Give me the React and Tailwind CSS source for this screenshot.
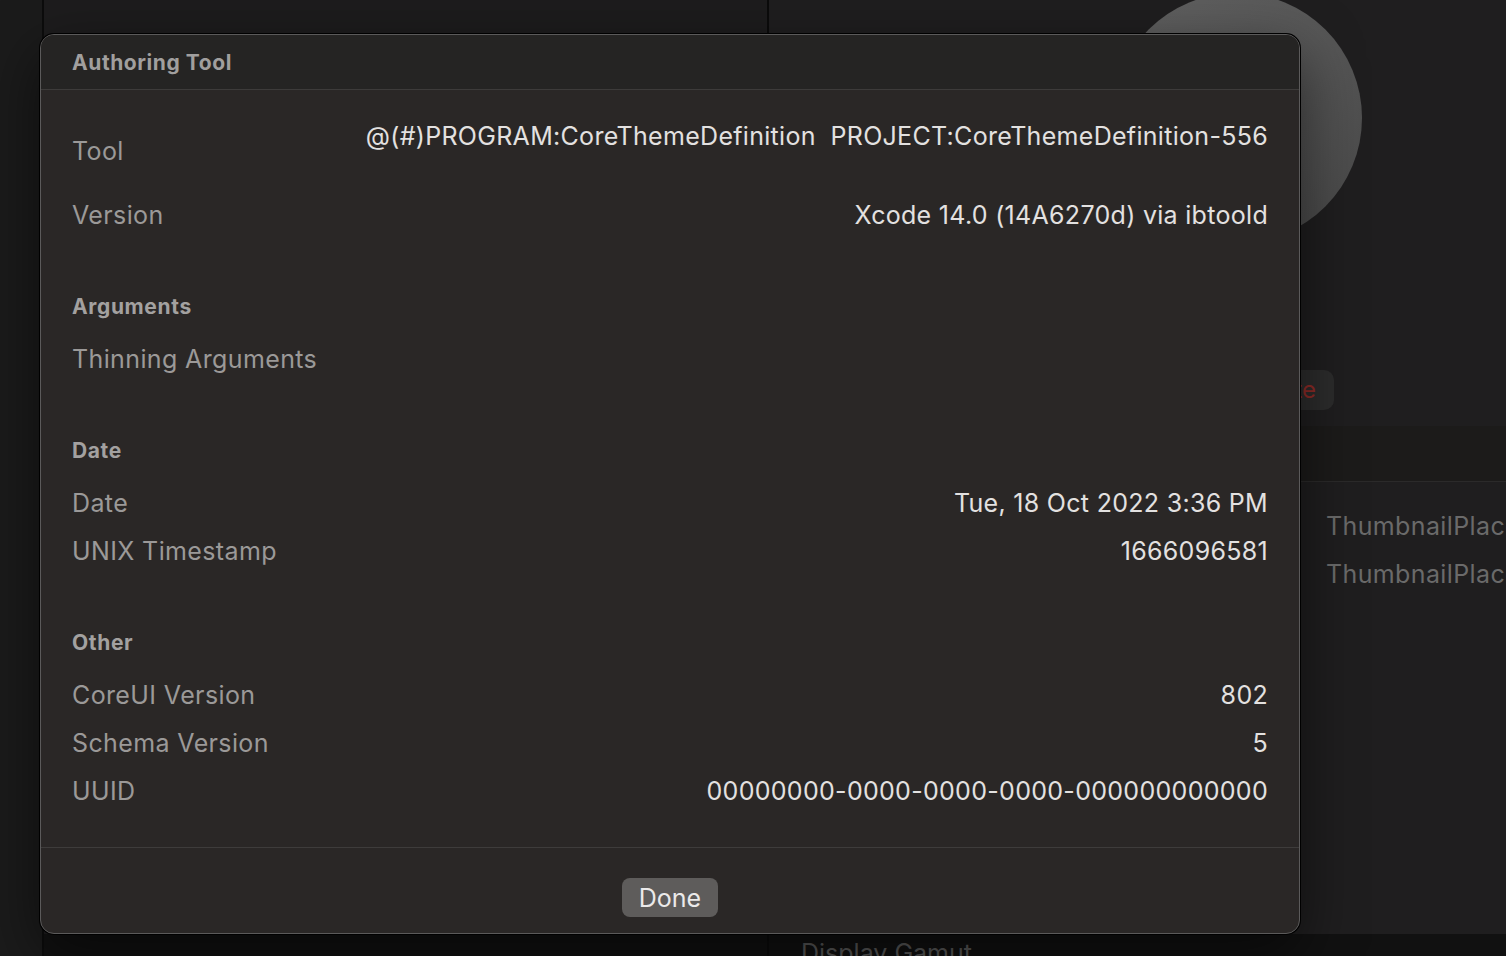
import React from 'react';

const font = { fontFamily: 'Inter, "Noto Sans", sans-serif' };

const Row = ({ label, value, tall }) => (
  <div className={`flex items-center justify-between ${tall ? 'h-[80px]' : 'h-[48px]'}`}>
    <span className="text-[25px] tracking-[0.015em] text-[#9b9998]">{label}</span>
    {value !== undefined && (
      <span className={`text-[25px] tracking-[0.012em] text-[#e3e1e0] text-right whitespace-pre ${tall ? 'leading-[32px] self-center' : ''}`}>
        {value}
      </span>
    )}
  </div>
);

const SectionHeader = ({ children }) => (
  <div className="h-[32px] mt-[51px] mb-[13px] flex items-center text-[21px] tracking-[0.03em] font-bold text-[#a3a1a0]">
    {children}
  </div>
);

const Background = () => (
  <div className="flex h-[956px] w-[1506px] overflow-hidden bg-[#1b1b1b]">
    <div className="w-[44px] shrink-0 bg-[#1b1b1b] border-r-2 border-[#0c0c0c]" />
    <div className="w-[725px] shrink-0 flex flex-col border-r-2 border-[#0b0b0b]">
      <div className="flex-1 bg-[#1d1c1d]" />
      <div className="h-[22px] bg-[#111111]" />
    </div>
    <div className="flex-1 flex flex-col bg-[#1f1e1f]">
      <div className="w-[250px] h-[250px] shrink-0 rounded-full bg-gradient-to-br from-[#616161] via-[#575757] to-[#474747] ml-[343px] mt-[-7px]" />
      <div className="mt-[127px] ml-[465px] w-[100px] h-[40px] rounded-[10px] bg-[#2c2c2c] flex items-center justify-end pr-[18px] text-[24px] text-[#8f2b27]">
        Delete
      </div>
      <div className="mt-[16px] h-[56px] bg-[#1c1b1a] border-b border-[#2b2a2a]" />
      <div className="mt-[21px] pl-[557px] text-[25px] tracking-[0.015em] text-[#6a6a6a] whitespace-nowrap">
        <div className="h-[48px] flex items-center">ThumbnailPlaceholder</div>
        <div className="h-[48px] flex items-center">ThumbnailPlaceholder</div>
      </div>
      <div className="flex-1" />
      <div className="h-[22px] bg-[#111111] pl-[32px] text-[25px] leading-[32px] pt-[3px] text-[#5a5a5a] overflow-hidden whitespace-nowrap">
        Display Gamut
      </div>
    </div>
  </div>
);

export default function App() {
  return (
    <div className="relative w-[1506px] h-[956px] overflow-hidden" style={font}>
      <Background />
      <div className="absolute left-[40px] top-[34px] w-[1260px] h-[900px] rounded-[14px] border border-[#5b5a5a] bg-[#2a2726] shadow-[0_0_0_1px_#000,0_20px_60px_rgba(0,0,0,0.55)] overflow-hidden flex flex-col">
        <div className="h-[55px] shrink-0 bg-[#252423] border-b border-[#3d3b3a] flex items-center pt-[1px] px-[31px] text-[21px] tracking-[0.027em] font-bold text-[#a19f9e]">
          Authoring Tool
        </div>
        <div className="flex-1 px-[31px] pt-[22px]">
          <Row
            tall
            label="Tool"
            value={'@(#)PROGRAM:CoreThemeDefinition  PROJECT:CoreThemeDefinition-556\n '}
          />
          <Row label="Version" value="Xcode 14.0 (14A6270d) via ibtoold" />

          <SectionHeader>Arguments</SectionHeader>
          <Row label="Thinning Arguments" />

          <SectionHeader>Date</SectionHeader>
          <Row label="Date" value="Tue, 18 Oct 2022 3:36 PM" />
          <Row label="UNIX Timestamp" value="1666096581" />

          <SectionHeader>Other</SectionHeader>
          <Row label="CoreUI Version" value="802" />
          <Row label="Schema Version" value="5" />
          <Row label="UUID" value="00000000-0000-0000-0000-000000000000" />
        </div>
        <div className="h-[86px] shrink-0 border-t border-[#3e3c3b] flex justify-center pt-[30px]">
          <button className="w-[96px] h-[39px] rounded-[8px] bg-[#5e5c5b] text-[25px] text-[#ebeaea] leading-none pt-[1px]">
            Done
          </button>
        </div>
      </div>
    </div>
  );
}
